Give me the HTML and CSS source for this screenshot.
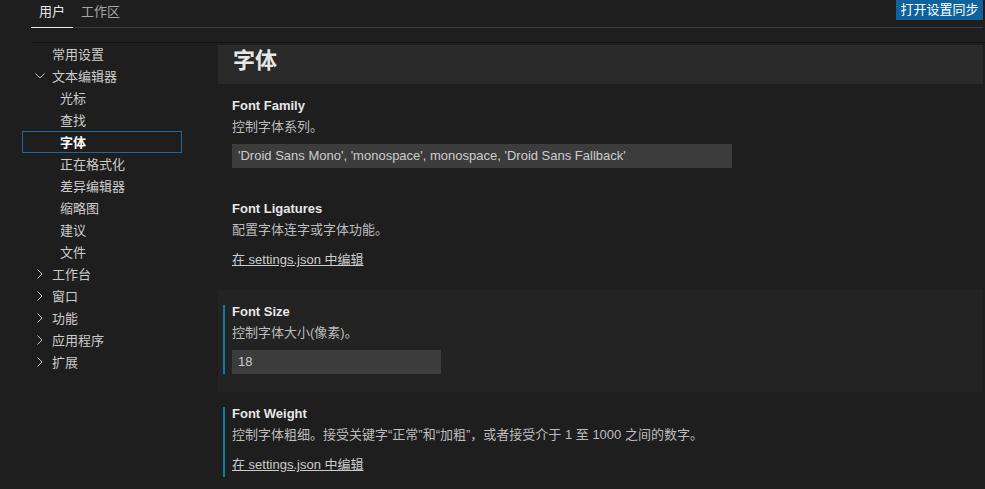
FILE: index.html
```html
<!DOCTYPE html>
<html lang="zh-CN">
<head>
<meta charset="utf-8">
<title>设置</title>
<link rel="stylesheet" href="styles.css">
</head>
<body>
<div class="page">
  <div class="topbar">
    <div class="tabs">
      <div class="tab active">用户</div>
      <div class="tab">工作区</div>
    </div>
    <button class="sync-btn">打开设置同步</button>
  </div>
  <div class="shadow-line"></div>
  <div class="body">
    <nav class="nav">
      <div class="row top"><span class="chev"></span>常用设置</div>
      <div class="row top"><span class="chev"><svg width="12" height="12" viewBox="0 0 12 12"><path d="M1.5 3.5 L6 8 L10.5 3.5" fill="none" stroke="#c5c5c5" stroke-width="1"/></svg></span>文本编辑器</div>
      <div class="row sub">光标</div>
      <div class="row sub">查找</div>
      <div class="row sub selected">字体</div>
      <div class="row sub">正在格式化</div>
      <div class="row sub">差异编辑器</div>
      <div class="row sub">缩略图</div>
      <div class="row sub">建议</div>
      <div class="row sub">文件</div>
      <div class="row top"><span class="chev"><svg width="12" height="12" viewBox="0 0 12 12"><path d="M3.5 1.5 L8 6 L3.5 10.5" fill="none" stroke="#c5c5c5" stroke-width="1"/></svg></span>工作台</div>
      <div class="row top"><span class="chev"><svg width="12" height="12" viewBox="0 0 12 12"><path d="M3.5 1.5 L8 6 L3.5 10.5" fill="none" stroke="#c5c5c5" stroke-width="1"/></svg></span>窗口</div>
      <div class="row top"><span class="chev"><svg width="12" height="12" viewBox="0 0 12 12"><path d="M3.5 1.5 L8 6 L3.5 10.5" fill="none" stroke="#c5c5c5" stroke-width="1"/></svg></span>功能</div>
      <div class="row top"><span class="chev"><svg width="12" height="12" viewBox="0 0 12 12"><path d="M3.5 1.5 L8 6 L3.5 10.5" fill="none" stroke="#c5c5c5" stroke-width="1"/></svg></span>应用程序</div>
      <div class="row top"><span class="chev"><svg width="12" height="12" viewBox="0 0 12 12"><path d="M3.5 1.5 L8 6 L3.5 10.5" fill="none" stroke="#c5c5c5" stroke-width="1"/></svg></span>扩展</div>
    </nav>
    <main class="content">
      <div class="group-title">字体</div>
      <section class="setting first">
        <div class="inner">
          <div class="label">Font Family</div>
          <div class="desc">控制字体系列。</div>
          <div class="input wide">'Droid Sans Mono', 'monospace', monospace, 'Droid Sans Fallback'</div>
        </div>
      </section>
      <section class="setting">
        <div class="inner">
          <div class="label">Font Ligatures</div>
          <div class="desc">配置字体连字或字体功能。</div>
          <a class="link">在 settings.json 中编辑</a>
        </div>
      </section>
      <section class="setting focused">
        <div class="inner modified">
          <div class="label">Font Size</div>
          <div class="desc">控制字体大小(像素)。</div>
          <div class="input narrow">18</div>
        </div>
      </section>
      <section class="setting">
        <div class="inner modified">
          <div class="label">Font Weight</div>
          <div class="desc">控制字体粗细。接受关键字“正常”和“加粗”，或者接受介于 1 至 1000 之间的数字。</div>
          <a class="link">在 settings.json 中编辑</a>
        </div>
      </section>
    </main>
  </div>
</div>
</body>
</html>
```
FILE: styles.css
```css
* { box-sizing: border-box; }
html, body {
  margin: 0;
  padding: 0;
  background: #1e1e1e;
  height: 100%;
  overflow: hidden;
}
body {
  font-family: "Liberation Sans", "Noto Sans CJK SC", sans-serif;
  font-size: 13px;
  color: #cccccc;
}
.topbar {
  display: flex;
  align-items: flex-start;
  margin-left: 31px;
  margin-right: 2px;
}
.tabs {
  display: flex;
  flex: 1;
  height: 28px;
  border-bottom: 1px solid #3c3c3c;
}
.tab {
  padding: 0 8px;
  line-height: 24px;
  height: 28px;
  color: #a8a8a8;
}
.tab.active {
  color: #e7e7e7;
  border-bottom: 1px solid #e7e7e7;
}
.sync-btn {
  font: inherit;
  border: none;
  margin: 0 0 0 -87px;
  background: #0e639c;
  color: #ffffff;
  width: 87px;
  height: 20px;
  line-height: 18px;
  padding: 0;
  text-align: center;
}
.shadow-line {
  margin: 14px 0 0 31px;
  height: 1px;
  background: #121212;
}
.body {
  display: flex;
}
.nav {
  width: 160px;
  margin-left: 22px;
  flex: none;
}
.row {
  height: 22px;
  line-height: 21px;
  display: flex;
  align-items: center;
  color: #cccccc;
  border: 1px solid transparent;
}
.row.top { padding-left: 11px; }
.row.sub { padding-left: 37px; }
.chev {
  width: 18px;
  height: 12px;
  display: inline-flex;
  align-items: center;
}
.chev svg { display: block; }
.row.selected {
  border-color: #1b6aa0;
  font-weight: bold;
  color: #ffffff;
}
.content {
  flex: 1;
  margin-left: 36px;
  margin-right: 2px;
  padding-top: 2px;
}
.group-title {
  background: #2a2a2a;
  height: 39px;
  padding-left: 15px;
  font-size: 22px;
  font-weight: bold;
  line-height: 31px;
  color: #e7e7e7;
}
.setting {
  padding: 15px 0 18px 5px;
}
.setting.first {
  padding-bottom: 19px;
}
.setting.focused {
  background: #232323;
}
.inner {
  padding-left: 7px;
  border-left: 2px solid transparent;
}
.inner.modified {
  border-left-color: #0c7d9d;
}
.label {
  font-weight: bold;
  color: #e7e7e7;
  line-height: 14px;
  height: 14px;
}
.desc {
  margin-top: 5px;
  line-height: 18px;
  color: #bdbdbd;
}
.input {
  margin-top: 8px;
  height: 24px;
  line-height: 24px;
  background: #3c3c3c;
  color: #cccccc;
  padding-left: 6px;
  white-space: nowrap;
}
.input.wide { width: 500px; }
.input.narrow { width: 209px; }
.link {
  display: block;
  margin-top: 12px;
  line-height: 18px;
  color: #cccccc;
  text-decoration: underline;
  padding-bottom: 3px;
}
```
